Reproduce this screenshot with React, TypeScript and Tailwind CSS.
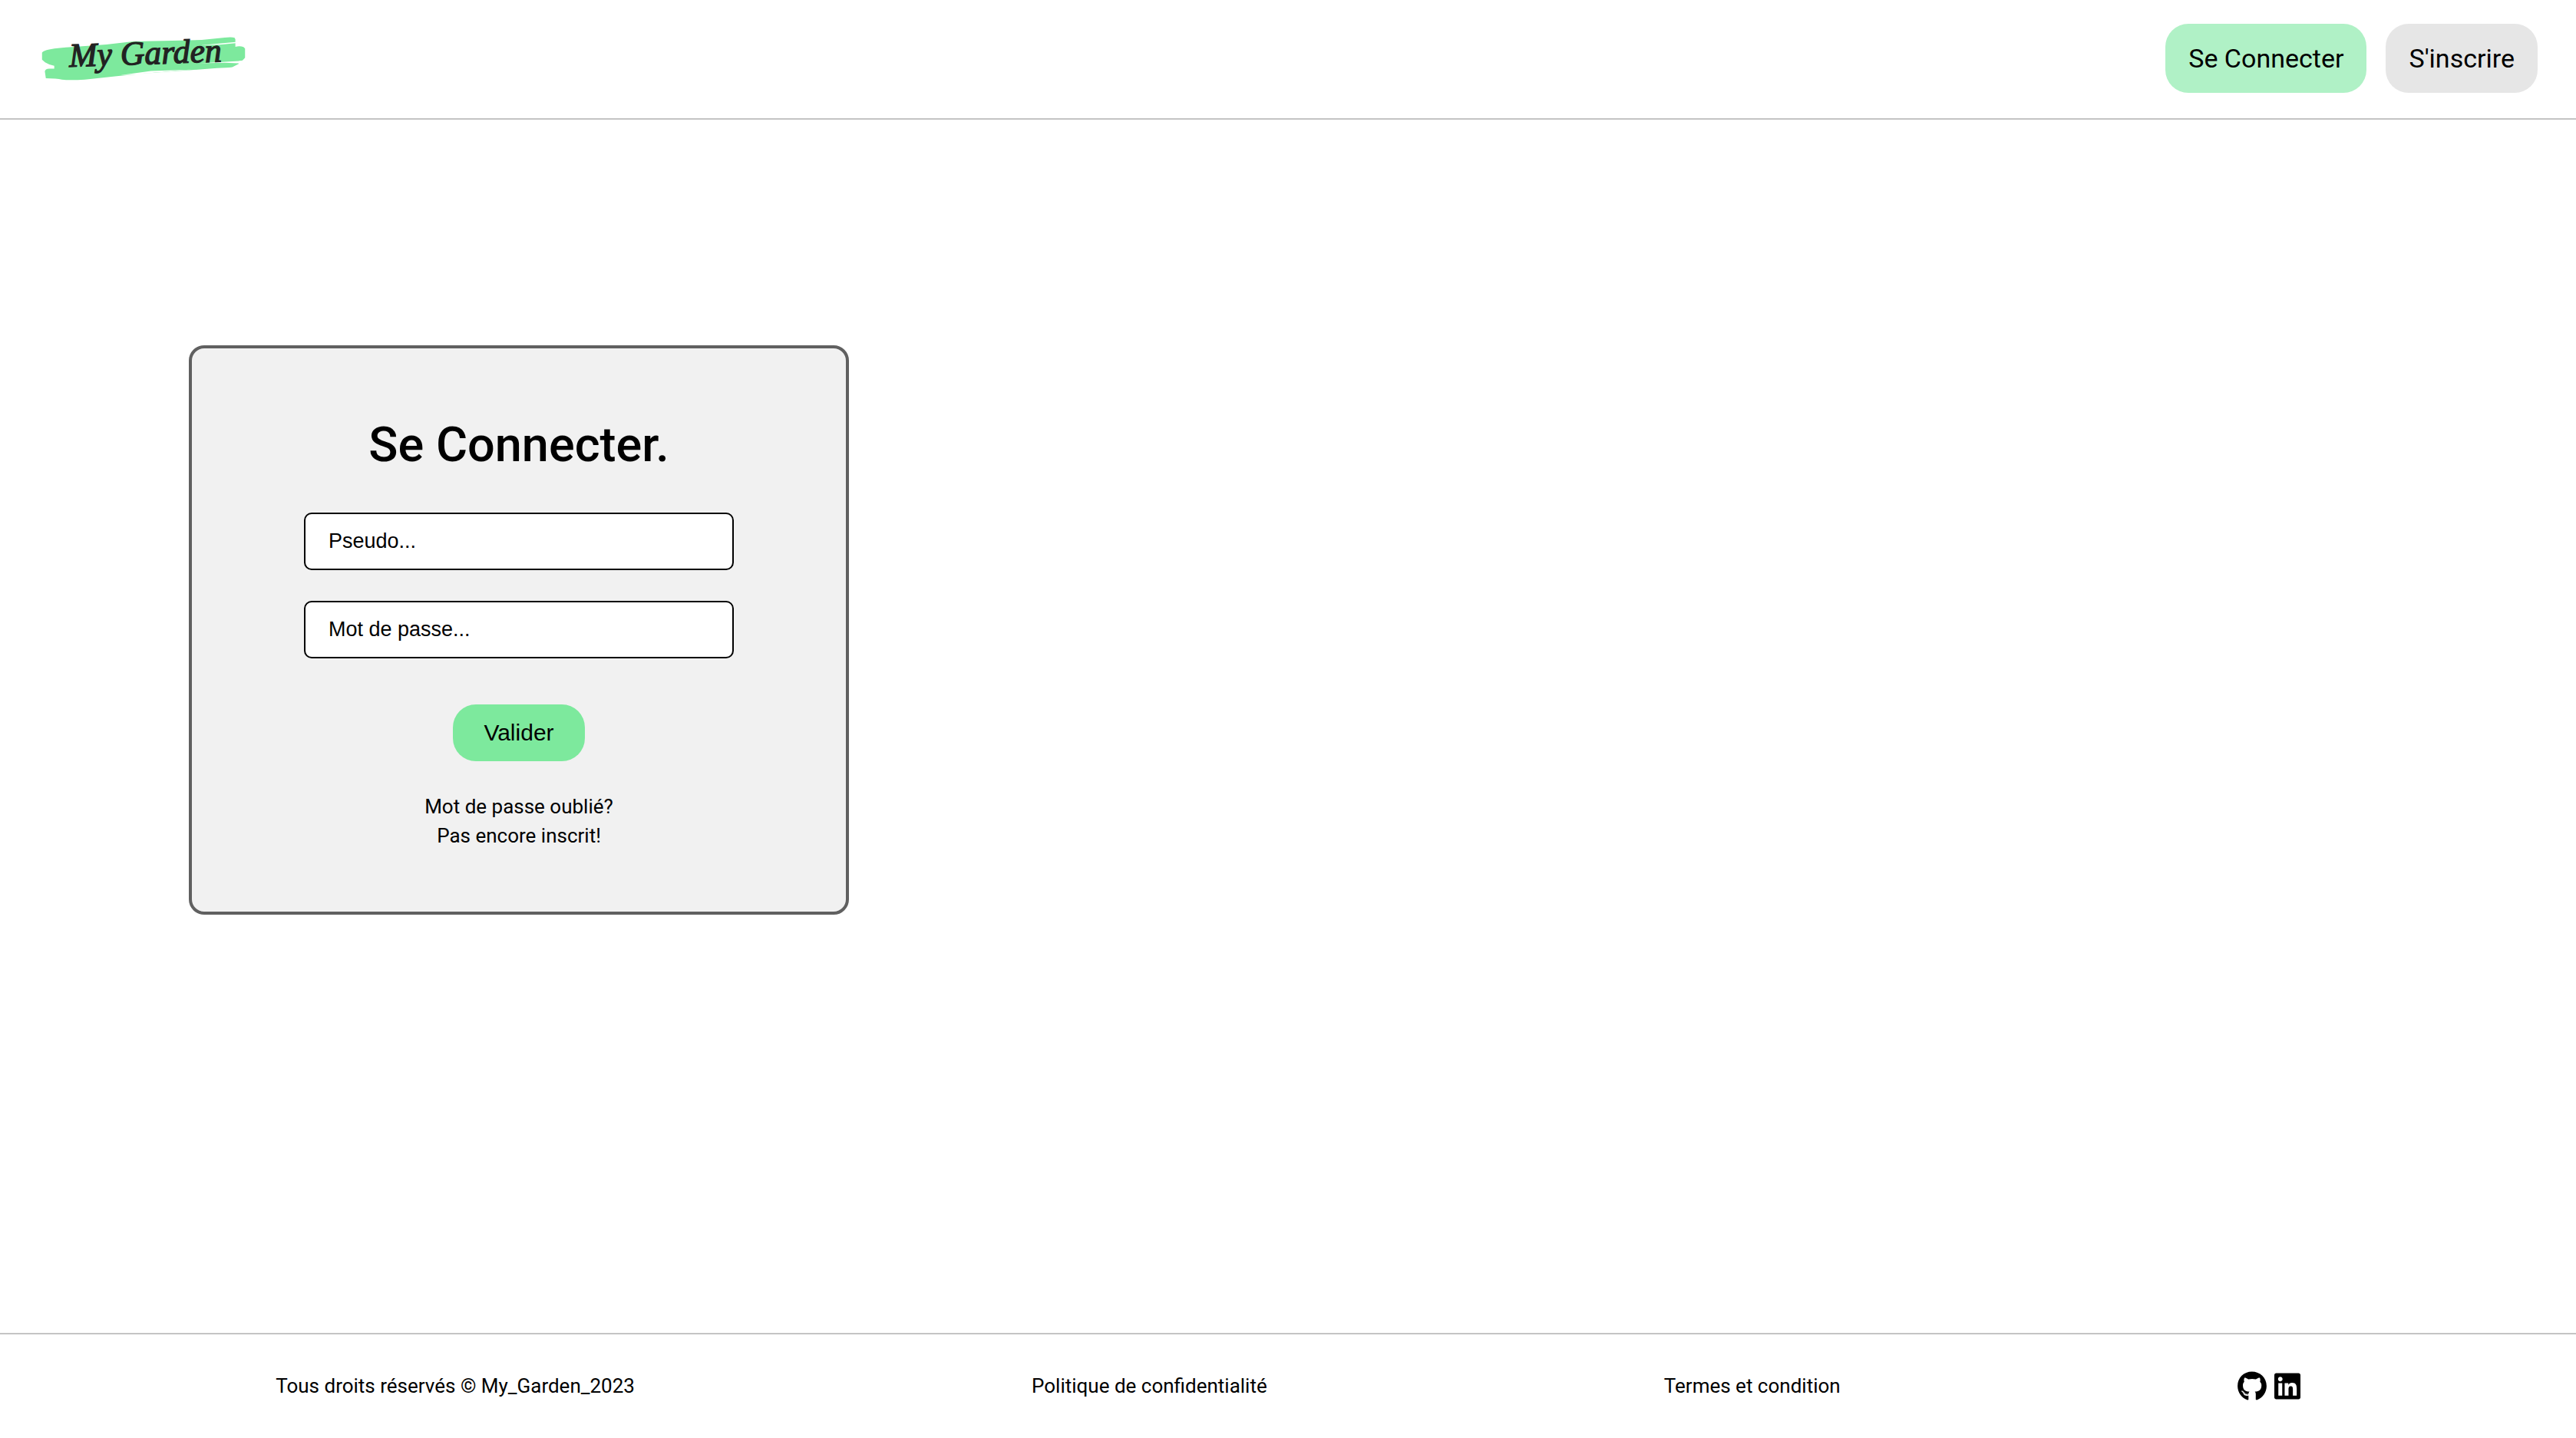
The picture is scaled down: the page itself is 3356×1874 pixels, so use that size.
import { FaGithub, FaLinkedin } from "react-icons/fa";

function Logo() {
  return (
    <a href="#" aria-label="My Garden" className="block">
      <svg viewBox="72 88 798 172" className="h-[57px] w-[266px] overflow-visible">
        <path
          fill="#7de99d"
          d="M72 150 Q78 142 100 138 Q140 130 190 128 L325 118 L430 106 L550 104 L700 100 L790 91 Q820 88 829 92 L832 98 V127 Q850 123 864 128 L870 134 V170 L860 181 L845 184 V194 L820 207 Q800 210 760 211 L520 229 L380 241 L240 256 Q180 260 150 256 Q130 251 87 251 L83 224 Q84 214 100 213 H120 V202 Q100 198 84 188 L72 178 Z"
        />
        <path fill="#fff" d="M695 121 L833 108 V113 L770 119 Z M690 192 L860 182 L872 184 V192 L845 192 L790 190 Z M380 239 L500 222 L660 217 L540 227 L450 234 L660 219 L500 234 Z" />
        <text
          x="180"
          y="206"
          transform="rotate(-2 180 206)"
          fontSize="132"
          stroke="#222"
          strokeWidth="4"
          className="fill-[#222] font-['Liberation_Serif',serif] italic"
        >
          My Garden
        </text>
      </svg>
    </a>
  );
}

const inputClass =
  "h-[75px] w-full rounded-[10px] border-2 border-black bg-white px-[30px] font-['Liberation_Sans',sans-serif] text-[27px] text-black placeholder:text-black placeholder:opacity-100";

export default function App() {
  return (
    <div className="flex min-h-screen flex-col bg-white font-[Roboto,sans-serif] text-[26px] text-black">
      <header className="flex items-center justify-between border-b-2 border-[#c4c4c4] pt-[31px] pr-[50px] pb-[33px] pl-[54px]">
        <Logo />
        <nav className="flex gap-[25px] text-[34px] leading-[42px]">
          <button type="button" className="rounded-[30px] bg-[#b0f1c6] px-[30px] py-6">
            Se Connecter
          </button>
          <button type="button" className="rounded-[30px] bg-[#e6e6e6] px-[30px] py-6">
            S'inscrire
          </button>
        </nav>
      </header>

      <main className="flex-1 px-[246px] pt-[294px]">
        <form className="flex w-[860px] max-w-full flex-col items-center rounded-[20px] border-4 border-[#606060] bg-[#f1f1f1] px-[146px] pt-[88px] pb-[80px]">
          <h1 className="text-[63px] leading-[76px] font-medium">Se Connecter.</h1>
          <div className="mt-[50px] flex w-full flex-col gap-10">
            <input type="text" aria-label="Pseudo" placeholder="Pseudo..." className={inputClass} />
            <input type="password" aria-label="Mot de passe" placeholder="Mot de passe..." className={inputClass} />
          </div>
          <button
            type="submit"
            className="mt-[60px] rounded-[30px] bg-[#7de99d] px-10 py-5 font-['Liberation_Sans',sans-serif] text-[30px] leading-[34px]"
          >
            Valider
          </button>
          <div className="mt-10 flex flex-col items-center leading-[38px]">
            <a href="#">Mot de passe oublié?</a>
            <a href="#">Pas encore inscrit!</a>
          </div>
        </form>
      </main>

      <footer className="flex h-[137px] items-center justify-around border-t-2 border-[#c4c4c4] px-[3%]">
        <p>Tous droits réservés © My_Garden_2023</p>
        <a href="#">Politique de confidentialité</a>
        <a href="#">Termes et condition</a>
        <div className="flex items-center gap-[10px]">
          <a href="#" aria-label="GitHub">
            <FaGithub className="h-[39px] w-[38px]" />
          </a>
          <a href="#" aria-label="LinkedIn">
            <FaLinkedin className="h-[39px] w-[34px]" />
          </a>
        </div>
      </footer>
    </div>
  );
}
